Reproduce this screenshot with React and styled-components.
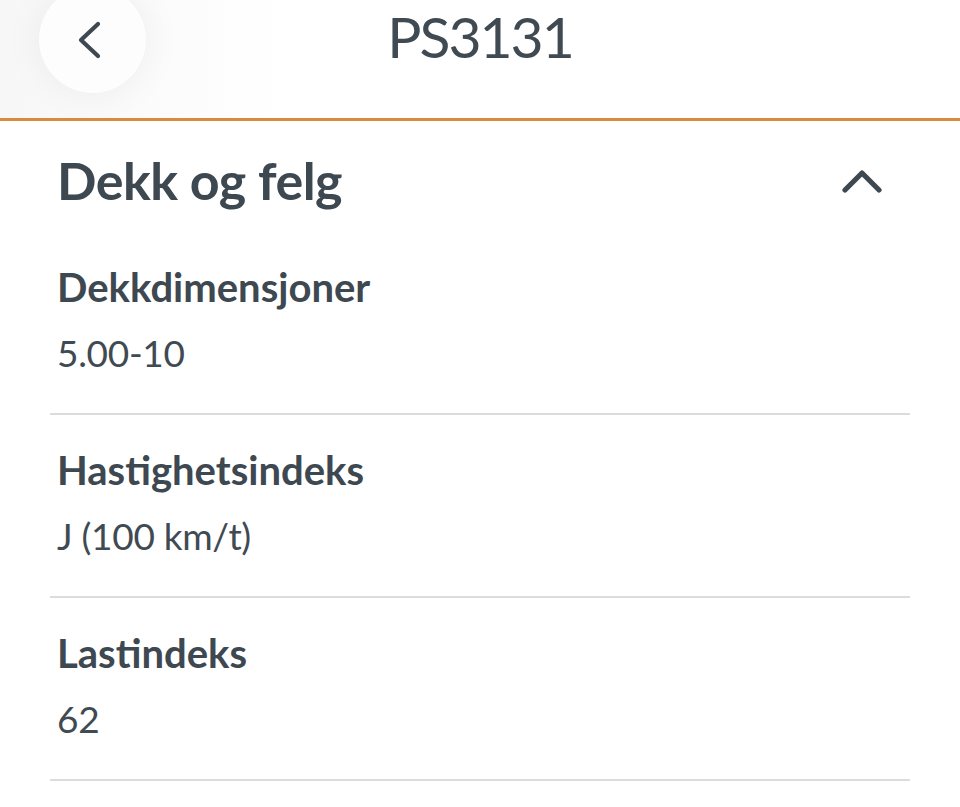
import React, { useState } from 'react'
import styled, { createGlobalStyle } from 'styled-components'

const GlobalStyle = createGlobalStyle`
  html, body {
    margin: 0;
    padding: 0;
    background: #ffffff;
  }
  body {
    font-family: Lato, "Open Sans", "Liberation Sans", sans-serif;
    color: #3d4851;
    overflow: hidden;
  }
`

const rows = [
  { id: 1, label: 'Dekkdimensjoner', value: '5.00-10' },
  { id: 2, label: 'Hastighetsindeks', value: 'J (100 km/t)' },
  { id: 3, label: 'Lastindeks', value: '62' },
]

const App = () => {
  const [open, setOpen] = useState(true)

  return (
    <Page>
      <GlobalStyle />
      <TopBar>
        <BackButton aria-label="Tilbake">
          <svg width="24" height="40" viewBox="0 0 24 40" fill="none">
            <path d="M20 4 L3 20 L20 36" stroke="#3d4851" strokeWidth="4.2" strokeLinecap="round" strokeLinejoin="round" />
          </svg>
        </BackButton>
        <Title>PS3131</Title>
        <span />
      </TopBar>

      <SectionHead onClick={() => setOpen(!open)}>
        <SectionTitle>Dekk og felg</SectionTitle>
        <svg width="44" height="26" viewBox="0 0 44 26" fill="none">
          <path d="M5 23 L22 6 L39 23" stroke="#3d4851" strokeWidth="5.2" strokeLinecap="round" strokeLinejoin="round" />
        </svg>
      </SectionHead>

      {open && (
        <List>
          {rows.map((row) => (
            <Row key={row.id}>
              <Label>{row.label}</Label>
              <Value>{row.value}</Value>
            </Row>
          ))}
        </List>
      )}
    </Page>
  )
}

export default App

const Page = styled.div`
  width: 960px;
  min-height: 807px;
  background: #ffffff;
`

const TopBar = styled.header`
  height: 118px;
  display: grid;
  grid-template-columns: 1fr auto 1fr;
  align-items: start;
  border-bottom: 3px solid #d98b3c;
  background: linear-gradient(to right, #f7f7f7 0%, #ffffff 30%);
  overflow: hidden;
`

const BackButton = styled.button`
  justify-self: start;
  width: 107px;
  height: 107px;
  margin: -14px 0 0 39px;
  border: none;
  border-radius: 50%;
  background: #fdfdfd;
  box-shadow: 0 0 40px rgba(0, 0, 0, 0.06);
  display: flex;
  align-items: center;
  justify-content: center;
  padding: 0 6px 0 0;
  cursor: pointer;
`

const Title = styled.h1`
  margin: 2px 0 0;
  font-size: 57px;
  font-weight: 400;
  letter-spacing: -2px;
  line-height: 68px;
  color: #3f4a52;
`

const SectionHead = styled.div`
  display: flex;
  align-items: center;
  justify-content: space-between;
  padding: 27px 76px 20px 57px;
  cursor: pointer;
`

const SectionTitle = styled.h2`
  margin: 0;
  font-size: 52px;
  font-weight: 700;
  letter-spacing: -0.5px;
  line-height: 64px;
  color: #3d4851;
`

const List = styled.div`
  margin: 0 50px;
`

const Row = styled.div`
  padding: 31px 7px 37px;
  border-bottom: 2px solid #dcdcdc;
`

const Label = styled.div`
  font-size: 40px;
  font-weight: 700;
  line-height: 48px;
  margin-bottom: 19px;
  color: #3d4851;
`

const Value = styled.div`
  font-size: 37px;
  font-weight: 400;
  letter-spacing: -0.3px;
  line-height: 46px;
  color: #3f4a52;
`
